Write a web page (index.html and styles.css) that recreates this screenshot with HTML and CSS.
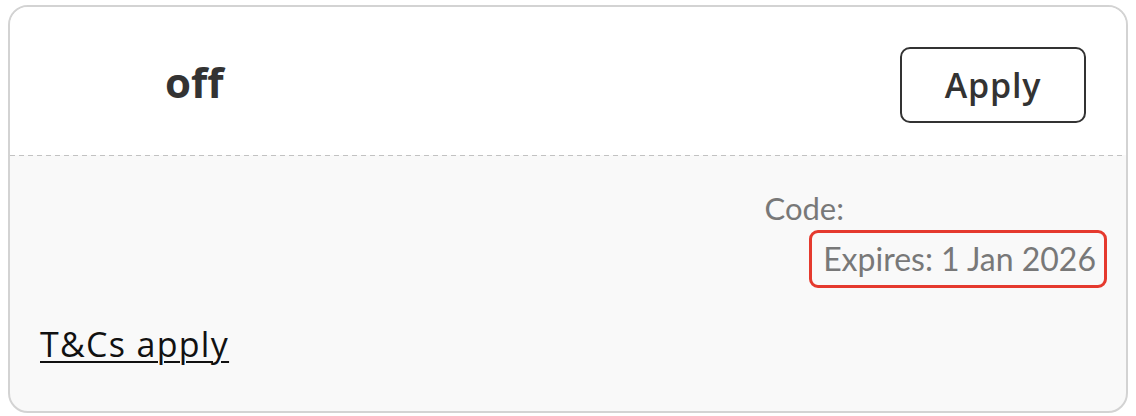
FILE: index.html
```html
<!DOCTYPE html>
<html lang="en">
<head>
<meta charset="utf-8">
<title>Offer</title>
<link rel="stylesheet" href="styles.css">
</head>
<body>
  <div class="card">
    <div class="card-top">
      <div class="offer-title">off</div>
      <button class="apply-btn" type="button">Apply</button>
    </div>
    <div class="divider"></div>
    <div class="card-bottom">
      <div class="meta">
        <div class="code-line">Code:</div>
        <div class="expires">Expires: 1 Jan 2026</div>
      </div>
      <a class="terms" href="#">T&amp;Cs apply</a>
    </div>
  </div>
</body>
</html>
```

FILE: styles.css
```css
* { box-sizing: border-box; }

body {
  margin: 5px 8px 0 8px;
  font-family: Lato, "Open Sans", sans-serif;
  background: #ffffff;
}

.card {
  width: 1120px;
  height: 408px;
  border: 2px solid #d3d3d3;
  border-radius: 20px;
  overflow: hidden;
  background: #f9f9f9;
  display: flex;
  flex-direction: column;
}

.card-top {
  height: 148px;
  background: #ffffff;
  display: flex;
  align-items: center;
  justify-content: space-between;
  padding: 8px 40px 0 155px;
}

.divider {
  height: 1px;
  flex-shrink: 0;
  background: repeating-linear-gradient(90deg, #c2c2c2 0 5px, transparent 5px 9px);
}

.offer-title {
  font-family: "Open Sans", Lato, sans-serif;
  font-size: 42px;
  font-weight: 700;
  color: #333333;
  line-height: 1;
  margin-top: -6px;
}

.apply-btn {
  width: 186px;
  height: 76px;
  border: 2px solid #333333;
  border-radius: 10px;
  background: #ffffff;
  font-family: "Open Sans", Lato, sans-serif;
  font-size: 34px;
  font-weight: 600;
  letter-spacing: 0.8px;
  color: #333333;
  padding: 0;
}

.card-bottom {
  flex: 1;
  display: flex;
  flex-direction: column;
  padding: 36px 19px 0 30px;
}

.meta {
  display: flex;
  flex-direction: column;
  align-items: flex-end;
  color: #787878;
  font-size: 32px;
  line-height: 32px;
}

.code-line {
  font-size: 31px;
  margin-right: 263px;
}

.expires {
  margin-top: 6px;
  border: 3px solid #e53a2e;
  border-radius: 9px;
  padding: 10px 8px 10px 11px;
}

.terms {
  align-self: flex-start;
  margin-top: 38px;
  font-family: "Open Sans", Lato, sans-serif;
  font-size: 34px;
  letter-spacing: 1.3px;
  color: #111111;
  text-decoration: underline;
  text-decoration-thickness: 2px;
  text-underline-offset: 4px;
  line-height: 36px;
}
```
